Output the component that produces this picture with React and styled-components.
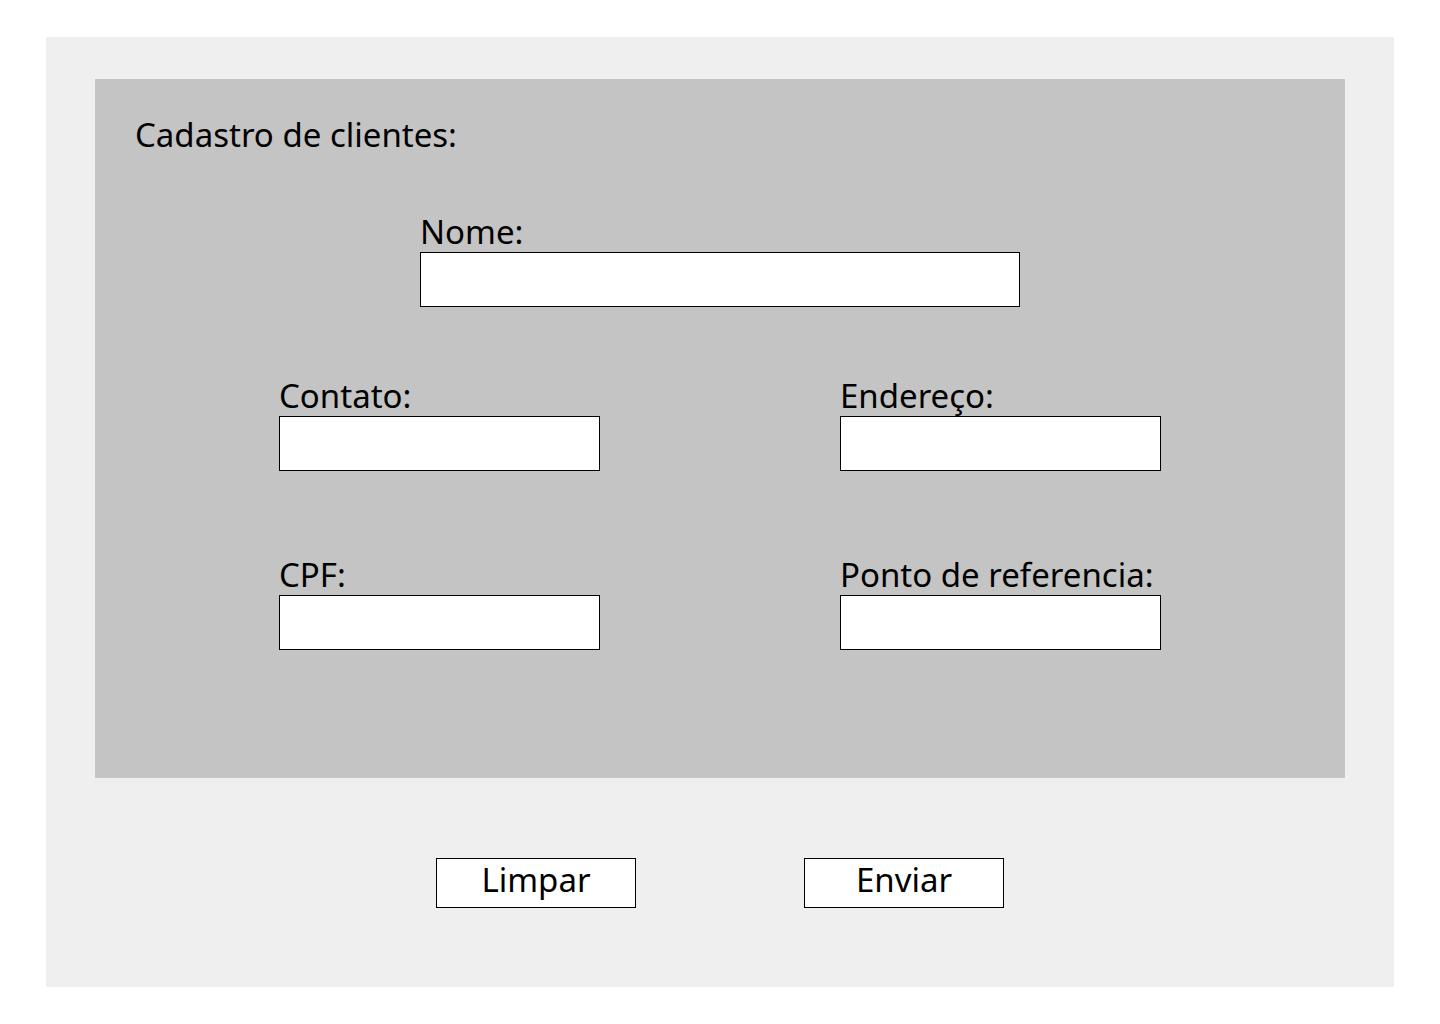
import React from "react";
import styled, { createGlobalStyle } from "styled-components";

const GlobalStyle = createGlobalStyle`
  * {
    box-sizing: border-box;
  }
  body {
    margin: 0;
    background: #fff;
    font-family: "Noto Sans", "Open Sans", sans-serif;
    color: #000;
  }
`;

const Page = styled.div`
  width: 100%;
  padding-top: 37px;
  display: flex;
  justify-content: center;
`;

const Outer = styled.div`
  width: 1348px;
  height: 950px;
  background: #efefef;
  padding: 42px 49px 0 49px;
  display: flex;
  flex-direction: column;
`;

const Panel = styled.form`
  height: 699px;
  background: #c4c4c4;
  padding: 36px 40px 0 40px;
  display: flex;
  flex-direction: column;
`;

const Title = styled.h1`
  margin: 0;
  font-size: 33px;
  font-weight: 400;
  line-height: 40px;
`;

const NameRow = styled.div`
  display: flex;
  justify-content: center;
  margin-top: 56px;
`;

const Grid = styled.div`
  display: grid;
  grid-template-columns: 321px 321px;
  column-gap: 240px;
  row-gap: 83px;
  justify-content: center;
  margin-top: 68px;
`;

const Field = styled.label`
  display: flex;
  flex-direction: column;
  width: ${(p) => p.width}px;
`;

const Label = styled.span`
  font-size: 33px;
  line-height: 41px;
  white-space: nowrap;
`;

const Input = styled.input`
  height: 55px;
  width: 100%;
  border: 1px solid #000;
  background: #fff;
  border-radius: 0;
  outline: none;
  padding: 0 10px;
  font-family: inherit;
  font-size: 20px;
`;

const Buttons = styled.div`
  display: flex;
  justify-content: center;
  gap: 168px;
  margin-top: 80px;
`;

const Button = styled.button`
  width: 200px;
  height: 50px;
  padding: 0;
  background: #fff;
  border: 1px solid #000;
  border-radius: 0;
  font-family: inherit;
  font-size: 33px;
  line-height: 41px;
  color: #000;
  display: flex;
  justify-content: center;
  align-items: flex-start;
  cursor: pointer;
`;

export default function App() {
  return (
    <>
      <GlobalStyle />
      <Page>
        <Outer>
          <Panel onSubmit={(e) => e.preventDefault()}>
            <Title>Cadastro de clientes:</Title>
            <NameRow>
              <Field width={600}>
                <Label>Nome:</Label>
                <Input type="text" />
              </Field>
            </NameRow>
            <Grid>
              <Field width={321}>
                <Label>Contato:</Label>
                <Input type="text" />
              </Field>
              <Field width={321}>
                <Label>Endereço:</Label>
                <Input type="text" />
              </Field>
              <Field width={321}>
                <Label>CPF:</Label>
                <Input type="text" />
              </Field>
              <Field width={321}>
                <Label>Ponto de referencia:</Label>
                <Input type="text" />
              </Field>
            </Grid>
          </Panel>
          <Buttons>
            <Button type="button">Limpar</Button>
            <Button type="button">Enviar</Button>
          </Buttons>
        </Outer>
      </Page>
    </>
  );
}
